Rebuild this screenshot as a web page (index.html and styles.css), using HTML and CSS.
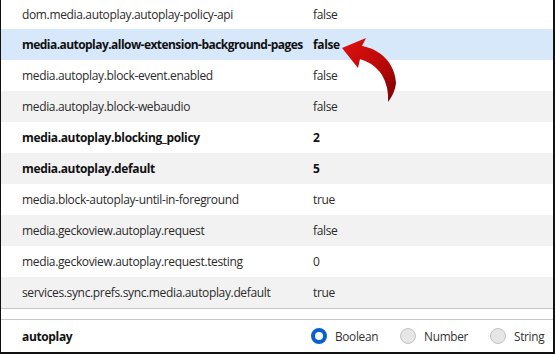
FILE: index.html
```html
<!DOCTYPE html>
<html lang="en">
	<head>
		<meta charset="UTF-8">
		<title>about:config</title>
		<link rel="stylesheet" href="styles.css">
	</head>
	<body>
		<div class="frame">
			<div class="prefs">
				<div class="row first"><span class="name">dom.media.autoplay.autoplay-policy-api</span><span class="value">false</span></div>
				<div class="row selected modified"><span class="name">media.autoplay.allow-extension-background-pages</span><span class="value">false</span></div>
				<div class="row"><span class="name">media.autoplay.block-event.enabled</span><span class="value">false</span></div>
				<div class="row odd"><span class="name">media.autoplay.block-webaudio</span><span class="value">false</span></div>
				<div class="row modified"><span class="name">media.autoplay.blocking_policy</span><span class="value">2</span></div>
				<div class="row odd modified"><span class="name">media.autoplay.default</span><span class="value">5</span></div>
				<div class="row"><span class="name">media.block-autoplay-until-in-foreground</span><span class="value">true</span></div>
				<div class="row odd"><span class="name">media.geckoview.autoplay.request</span><span class="value">false</span></div>
				<div class="row"><span class="name">media.geckoview.autoplay.request.testing</span><span class="value">0</span></div>
				<div class="row odd"><span class="name">services.sync.prefs.sync.media.autoplay.default</span><span class="value">true</span></div>
			</div>
			<div class="spacer"></div>
			<div class="add-row">
				<span class="name">autoplay</span>
				<div class="types">
					<label class="radio"><span class="dot checked"></span>Boolean</label>
					<label class="radio"><span class="dot"></span>Number</label>
					<label class="radio"><span class="dot"></span>String</label>
				</div>
			</div>

			<svg class="arrow" width="70" height="72" viewBox="0 0 70 72">
				<defs>
					<linearGradient id="red" x1="0" y1="0" x2="1" y2="1">
						<stop offset="0" stop-color="#e01010"/>
						<stop offset="0.6" stop-color="#b80808"/>
						<stop offset="1" stop-color="#7a0000"/>
					</linearGradient>
				</defs>
				<path d="M7 13 L31 3 L27 11 C45 14 60 28 61 48 Q60 58 53 67 Q54 52 47 40 C41 31 34 27 25 24 L23 33 Z" fill="url(#red)"/>
			</svg>
		</div>
	</body>
</html>
```

FILE: styles.css
```css
* {
    box-sizing: border-box;
    margin: 0;
    padding: 0;
}
body {
    background: #fff;
    font-family: 'Open Sans', 'Noto Sans', sans-serif;
    font-size: 12px;
    letter-spacing: -0.35px;
    color: #2b2b2b;
}
.frame {
    position: relative;
    width: 555px;
    height: 354px;
    border-left: 1px solid #111;
    border-right: 2px solid #111;
    border-bottom: 2px solid #111;
    display: flex;
    flex-direction: column;
    overflow: hidden;
}
.prefs {
    border-bottom: 1px solid #c8c8c8;
}
.row {
    display: grid;
    grid-template-columns: 291px 1fr;
    align-items: center;
    height: 31px;
    padding-left: 21px;
    background: #fff;
    white-space: nowrap;
}
.row.first {
    height: 29px;
}
.row.odd {
    background: #f2f2f2;
}
.row.selected {
    background: #d8e8fb;
}
.row.modified {
    font-weight: bold;
    color: #111;
}
.row.selected .name {
    letter-spacing: -0.55px;
}
.spacer {
    height: 11px;
    border-bottom: 1px solid #c8c8c8;
}
.add-row {
    flex: 1;
    display: flex;
    align-items: center;
    padding-left: 21px;
}
.add-row .name {
    font-weight: bold;
    color: #111;
    width: 289px;
    flex-shrink: 0;
}
.types {
    display: flex;
    gap: 22px;
}
.radio {
    display: flex;
    align-items: center;
    gap: 8px;
    font-size: 11.8px;
    letter-spacing: -0.3px;
    color: #333;
}
.dot {
    width: 16px;
    height: 16px;
    border-radius: 50%;
    background: #e6e6e6;
    border: 1px solid #c4c4c4;
}
.dot.checked {
    background: #fff;
    border: 4px solid #0a5fd0;
}
.arrow {
    position: absolute;
    left: 334px;
    top: 35px;
}
```
